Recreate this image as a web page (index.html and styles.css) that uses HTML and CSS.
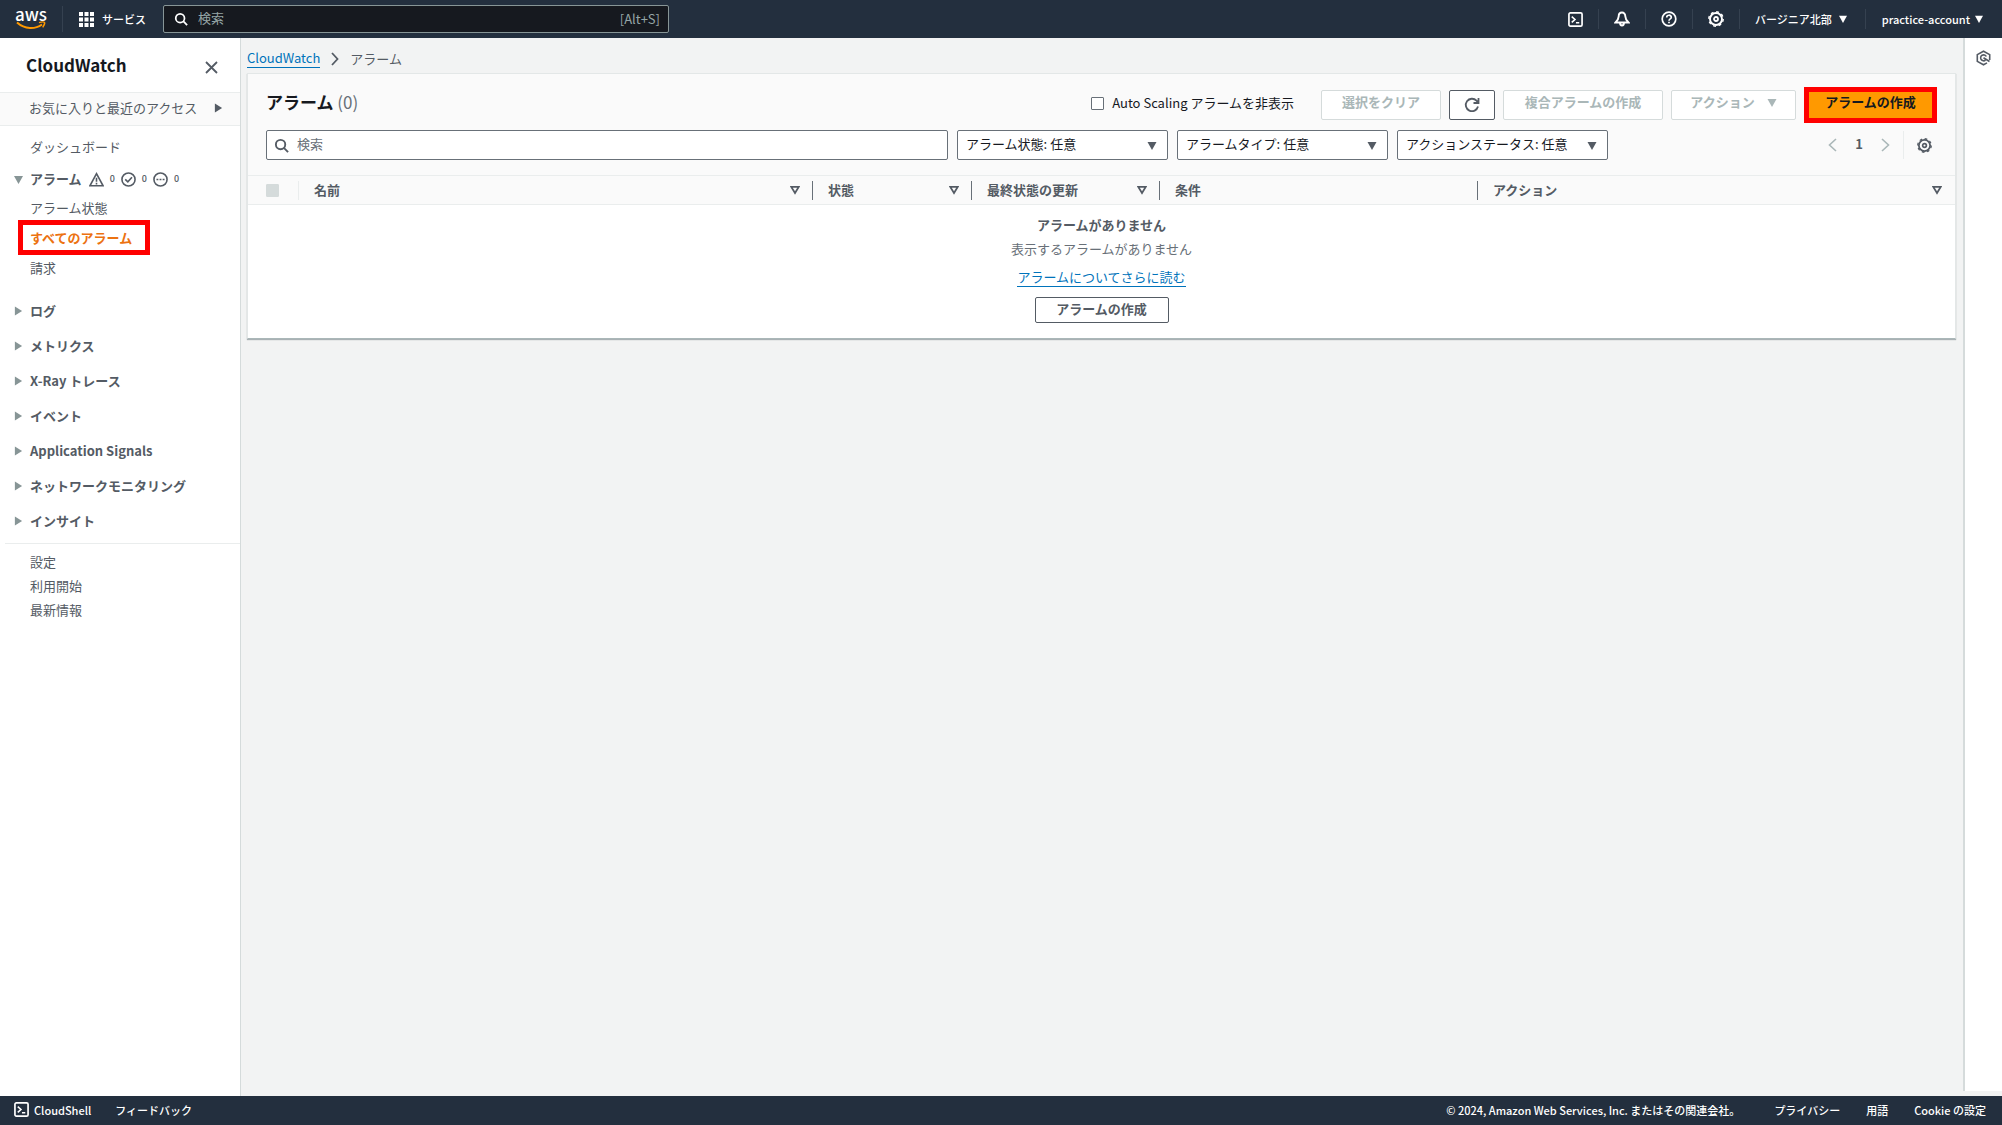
FILE: index.html
```html
<!DOCTYPE html>
<html lang="ja">
<head>
<meta charset="utf-8">
<title>CloudWatch</title>
<link rel="stylesheet" href="styles.css">
</head>
<body>
<svg width="0" height="0" class="sprite" aria-hidden="true">
  <symbol id="i-search" viewBox="0 0 16 16"><circle cx="7" cy="7" r="5" fill="none" stroke="currentColor" stroke-width="2"/><path d="M10.5 10.5 15 15" stroke="currentColor" stroke-width="2"/></symbol>
  <symbol id="i-shell" viewBox="0 0 16 16"><rect x="1" y="1" width="14" height="14" rx="1.5" fill="none" stroke="currentColor" stroke-width="1.8"/><path d="M4 5l3.4 3L4 11M8.5 11.5H12" fill="none" stroke="currentColor" stroke-width="1.7"/></symbol>
  <symbol id="i-gear" viewBox="0 0 16 16"><circle cx="8" cy="8" r="6" fill="none" stroke="currentColor" stroke-width="1.9"/><circle cx="8" cy="8" r="7.2" fill="none" stroke="currentColor" stroke-width="1.4" stroke-dasharray="2.8 2.85"/><circle cx="8" cy="8" r="2" fill="none" stroke="currentColor" stroke-width="1.8"/></symbol>
  <symbol id="i-down" viewBox="0 0 10 10"><path d="M0 1h10L5 10z" fill="currentColor"/></symbol>
  <symbol id="i-right" viewBox="0 0 10 10"><path d="M1 0v10l8-5z" fill="currentColor"/></symbol>
  <symbol id="i-sort" viewBox="0 0 10 10"><path d="M1.2 1.8h7.6L5 8z" fill="none" stroke="currentColor" stroke-width="1.7"/></symbol>
</svg>

<header class="topbar">
  <a class="aws" href="#" aria-label="AWS"><span>aws</span><svg width="30" height="9" viewBox="0 0 30 9"><path d="M1 1.500C9 8.500 19 8.500 26 3.500" fill="none" stroke="#f90" stroke-width="2"/><path d="M23 1.600c3-.9 5-.7 5.400-.2s-.2 3-1.700 5" fill="none" stroke="#f90" stroke-width="1.500"/></svg></a>
  <button class="services"><svg width="15" height="15" viewBox="0 0 15 15" fill="currentColor"><path d="M0 0h4v4H0zM5.500 0h4v4h-4zM11 0h4v4h-4zM0 5.500h4v4H0zM5.500 5.500h4v4h-4zM11 5.500h4v4h-4zM0 11h4v4H0zM5.500 11h4v4h-4zM11 11h4v4h-4z"/></svg>サービス</button>
  <label class="topsearch"><svg width="14" height="14"><use href="#i-search"/></svg><input type="text" placeholder="検索" aria-label="検索"><span>[Alt+S]</span></label>
  <nav class="tools">
    <button aria-label="CloudShell"><svg width="15" height="15"><use href="#i-shell"/></svg></button>
    <button aria-label="通知"><svg width="16" height="16" viewBox="0 0 16 16" fill="none" stroke="currentColor" stroke-width="1.900"><path d="M8 1.500C6 1.500 4.700 3.200 4.700 5.200c0 2.500-1 4-3.200 6.300h13c-2.200-2.300-3.200-3.800-3.200-6.300 0-2-1.300-3.700-3.300-3.700zM6 11.500c0 4 4 4 4 0"/></svg></button>
    <button aria-label="ヘルプ"><svg width="16" height="16" viewBox="0 0 16 16" fill="none" stroke="currentColor" stroke-width="1.700"><circle cx="8" cy="8" r="6.800"/><path d="M5.700 6.500C5.700 3.500 10.300 3.500 10.300 6.300 10.300 8 8 7.800 8 9.800M8 10.700v1.600"/></svg></button>
    <button aria-label="設定"><svg width="16" height="16"><use href="#i-gear"/></svg></button>
    <button class="region">バージニア北部<svg width="8" height="8"><use href="#i-down"/></svg></button>
    <button class="account">practice-account<svg width="8" height="8"><use href="#i-down"/></svg></button>
  </nav>
</header>

<div class="shell">
  <aside class="side">
    <div class="side-title"><h2>CloudWatch</h2><button aria-label="閉じる"><svg width="13" height="13" viewBox="0 0 13 13" stroke="currentColor" stroke-width="1.800"><path d="M1 1l11 11M12 1 1 12"/></svg></button></div>
    <button class="favorites">お気に入りと最近のアクセス<svg width="9" height="10"><use href="#i-right"/></svg></button>
    <nav>
      <ul class="menu">
        <li><a href="#">ダッシュボード</a></li>
        <li class="group"><svg width="9" height="9"><use href="#i-down"/></svg><a href="#">アラーム</a>
          <span class="counts">
            <svg width="15" height="15" viewBox="0 0 16 16" fill="none" stroke="currentColor" stroke-width="1.700"><path d="M8 1.800 15 14.700H1zM8 6v4.500M8 11.500v1.700"/></svg>0
            <svg width="15" height="15" viewBox="0 0 16 16" fill="none" stroke="currentColor" stroke-width="1.700"><circle cx="8" cy="8" r="7"/><path d="M4.500 7.800 7.300 10.500 11.700 5.500"/></svg>0
            <svg width="15" height="15" viewBox="0 0 16 16" fill="none" stroke="currentColor" stroke-width="1.700"><circle cx="8" cy="8" r="7"/><path d="M3.700 8h2M7 8h2M10.300 8h2"/></svg>0
          </span>
        </li>
      </ul>
      <ul class="submenu">
        <li><a href="#">アラーム状態</a></li>
        <li><a class="current" href="#" aria-current="page">すべてのアラーム</a></li>
        <li><a href="#">請求</a></li>
      </ul>
      <ul class="groups">
        <li class="group"><svg width="9" height="10"><use href="#i-right"/></svg><a href="#">ログ</a></li>
        <li class="group"><svg width="9" height="10"><use href="#i-right"/></svg><a href="#">メトリクス</a></li>
        <li class="group"><svg width="9" height="10"><use href="#i-right"/></svg><a href="#">X-Ray トレース</a></li>
        <li class="group"><svg width="9" height="10"><use href="#i-right"/></svg><a href="#">イベント</a></li>
        <li class="group"><svg width="9" height="10"><use href="#i-right"/></svg><a href="#">Application Signals</a></li>
        <li class="group"><svg width="9" height="10"><use href="#i-right"/></svg><a href="#">ネットワークモニタリング</a></li>
        <li class="group"><svg width="9" height="10"><use href="#i-right"/></svg><a href="#">インサイト</a></li>
      </ul>
      <ul class="extras">
        <li><a href="#">設定</a></li>
        <li><a href="#">利用開始</a></li>
        <li><a href="#">最新情報</a></li>
      </ul>
    </nav>
  </aside>

  <main class="content">
    <nav class="crumbs"><a href="#">CloudWatch</a><svg width="8" height="14" viewBox="0 0 8 14" fill="none" stroke="currentColor" stroke-width="1.800"><path d="M1 1l5.500 6L1 13"/></svg><span>アラーム</span></nav>
    <section class="card">
      <div class="card-head">
        <div class="title-row">
          <h1>アラーム <span>(0)</span></h1>
          <label class="hide-auto"><input type="checkbox">Auto Scaling アラームを非表示</label>
          <div class="actions">
            <button class="btn w-clear" disabled>選択をクリア</button>
            <button class="btn w-refresh" aria-label="更新"><svg width="16" height="16" viewBox="0 0 16 16" fill="none" stroke="currentColor" stroke-width="1.800"><path d="M14 9.500A6.200 6.200 0 1 1 12.500 3.700L14 5.500M14.500 1v5H9.500"/></svg></button>
            <button class="btn w-composite" disabled>複合アラームの作成</button>
            <button class="btn w-action" disabled>アクション<svg width="10" height="9"><use href="#i-down"/></svg></button>
            <button class="btn primary">アラームの作成</button>
          </div>
        </div>
        <div class="filter-row">
          <label class="search"><svg width="15" height="15"><use href="#i-search"/></svg><input type="text" placeholder="検索" aria-label="アラームを検索"></label>
          <div class="select"><select aria-label="アラーム状態"><option>アラーム状態: 任意</option></select><svg width="10" height="9"><use href="#i-down"/></svg></div>
          <div class="select"><select aria-label="アラームタイプ"><option>アラームタイプ: 任意</option></select><svg width="10" height="9"><use href="#i-down"/></svg></div>
          <div class="select"><select aria-label="アクションステータス"><option>アクションステータス: 任意</option></select><svg width="10" height="9"><use href="#i-down"/></svg></div>
          <div class="pager">
            <button aria-label="前へ" disabled><svg width="9" height="14" viewBox="0 0 9 14" fill="none" stroke="currentColor" stroke-width="1.600"><path d="M8 1 1.500 7 8 13"/></svg></button>
            <b>1</b>
            <button aria-label="次へ" disabled><svg width="9" height="14" viewBox="0 0 9 14" fill="none" stroke="currentColor" stroke-width="1.600"><path d="M1 1l6.500 6L1 13"/></svg></button>
            <button class="prefs" aria-label="表示設定"><svg width="15" height="15"><use href="#i-gear"/></svg></button>
          </div>
        </div>
      </div>
      <table>
        <colgroup><col class="c-check"><col class="c-name"><col class="c-state"><col class="c-updated"><col class="c-cond"><col></colgroup>
        <thead>
          <tr>
            <th class="check"><div><input type="checkbox" aria-label="すべて選択" disabled></div></th>
            <th><div>名前<svg width="10" height="10"><use href="#i-sort"/></svg></div></th>
            <th><div>状態<svg width="10" height="10"><use href="#i-sort"/></svg></div></th>
            <th><div>最終状態の更新<svg width="10" height="10"><use href="#i-sort"/></svg></div></th>
            <th><div>条件</div></th>
            <th><div>アクション<svg width="10" height="10"><use href="#i-sort"/></svg></div></th>
          </tr>
        </thead>
        <tbody>
          <tr><td colspan="6">
            <div class="empty">
              <b>アラームがありません</b>
              <p>表示するアラームがありません</p>
              <a href="#">アラームについてさらに読む</a>
              <button class="btn">アラームの作成</button>
            </div>
          </td></tr>
        </tbody>
      </table>
    </section>
  </main>

  <aside class="help"><button aria-label="情報"><svg width="15" height="16" viewBox="0 0 15 16" fill="none" stroke="currentColor" stroke-width="1.600"><path d="M13.700 10V4.600L7.500 1.200 1.300 4.600v6.800l6.200 3.400 3.500-1.900"/><path d="M10.300 6.500A3 3 0 1 0 9.500 10.200M7.500 7.800 13.500 11.500"/></svg></button></aside>
</div>

<footer class="footer">
  <a href="#"><svg width="15" height="15"><use href="#i-shell"/></svg>CloudShell</a>
  <a href="#">フィードバック</a>
  <span>© 2024, Amazon Web Services, Inc. またはその関連会社。</span>
  <a href="#">プライバシー</a>
  <a href="#">用語</a>
  <a href="#">Cookie の設定</a>
</footer>
</body>
</html>
```
FILE: styles.css
```css
* { box-sizing: border-box; }
body {
  margin: 0;
  min-height: 100vh;
  display: flex;
  flex-direction: column;
  background: #f2f3f3;
  color: #545b64;
  font: 13px/20px "Noto Sans CJK JP", sans-serif;
}
button, input, select { font: inherit; color: inherit; margin: 0; }
button { background: none; border: 0; padding: 0; display: flex; align-items: center; white-space: nowrap; }
a { color: inherit; text-decoration: none; }
ul { list-style: none; margin: 0; padding: 0; }
h1, h2, p { margin: 0; }
svg { flex: none; display: block; }
.sprite { position: absolute; }

/* Top bar */
.topbar {
  height: 38px;
  display: flex;
  align-items: center;
  background: #232f3e;
  color: #fff;
  font-size: 11px;
  font-weight: 500;
}
.aws {
  display: flex;
  flex-direction: column;
  align-items: center;
  width: 63px;
  padding-bottom: 2px;
  border-right: 1px solid #354150;
  font-size: 17px;
  line-height: 15px;
}
.services { gap: 8px; padding: 0 17px 0 16px; font-weight: 500; }
.topsearch {
  display: flex;
  align-items: center;
  width: 506px;
  height: 28px;
  padding: 0 8px 0 10px;
  gap: 10px;
  background: #16191f;
  border: 1px solid #879596;
  border-radius: 2px;
  font-size: 13px;
  font-weight: 400;
}
.topsearch input { flex: 1; min-width: 0; border: 0; padding: 0 0 2px; background: none; }
.topsearch input::placeholder, .topsearch span { color: #95a5a6; opacity: 1; }
.tools { margin-left: auto; display: flex; }
.tools button { width: 47px; height: 20px; justify-content: center; border-right: 1px solid #354150; font-weight: 500; }
.tools .region { width: auto; padding: 0 18px 0 15px; gap: 7px; }
.tools .account { width: auto; padding: 0 19px 0 16px; gap: 5px; border: 0; }

.shell { flex: 1; display: flex; }

/* Side navigation */
.side { width: 241px; background: #fff; border-right: 1px solid #d5dbdb; }
.side-title { display: flex; align-items: center; justify-content: space-between; height: 54px; padding: 0 22px 0 26px; }
.side-title h2 { font-size: 17px; color: #16191f; }
.side-title button { padding-top: 4px; }
.favorites {
  width: 100%;
  height: 34px;
  padding: 0 17px 2px 29px;
  justify-content: space-between;
  background: #fafafa;
  border-top: 1px solid #eaeded;
  border-bottom: 1px solid #eaeded;
}
.menu { display: flex; flex-direction: column; gap: 12px; padding: 11px 0 9px 30px; }
.group { display: flex; align-items: center; gap: 7px; font-weight: 700; margin-left: -16px; }
.group > svg { color: #879596; }
.counts { display: flex; align-items: center; gap: 6px; font-size: 9px; font-weight: 500; }
.submenu { padding-left: 30px; }
.current {
  display: block;
  width: 132px;
  margin: 2px 0 3px -12px;
  padding: 3px 7px 2px;
  border: 5px solid #f00;
  color: #ec7211;
  font-weight: 700;
}
.groups { display: flex; flex-direction: column; gap: 15px; padding: 23px 0 12px 30px; }
.extras { margin-left: 5px; padding: 6px 0 0 25px; border-top: 1px solid #eaeded; line-height: 24px; }

/* Main area */
.content { flex: 1; min-width: 0; padding: 0 7px 0 6px; }
.crumbs { display: flex; align-items: center; gap: 11px; height: 35px; padding-top: 6px; }
.crumbs a, .empty a { color: #0073bb; border-bottom: 1px solid #0073bb; line-height: 18px; }
.card { background: #fff; border: 1px solid #e3e7e7; border-bottom-color: #aab7b8; box-shadow: 0 1px 1px rgba(0, 28, 36, .3); }
.card-head { padding: 13px 18px 15px; background: #fafafa; display: flex; flex-direction: column; gap: 7px; }
.title-row { display: flex; align-items: center; height: 36px; }
h1 { font-size: 17px; color: #16191f; padding-bottom: 6px; }
h1 span { font-weight: 400; color: #687078; }
.hide-auto { margin-left: auto; display: flex; align-items: center; gap: 8px; color: #16191f; padding-bottom: 4px; }
input[type="checkbox"] { appearance: none; width: 13px; height: 13px; background: #fff; border: 1px solid #687078; border-radius: 1px; }
input[type="checkbox"]:disabled { background: #d5dbdb; border-color: #d5dbdb; }
.actions { display: flex; align-items: center; gap: 8px; margin-left: 27px; }
.btn {
  justify-content: center;
  gap: 12px;
  height: 30px;
  padding: 0 18px 6px;
  background: #fff;
  border: 1px solid #545b64;
  border-radius: 2px;
  color: #545b64;
  font-weight: 700;
}
.btn:disabled { color: #aab7b8; border-color: #d5dbdb; }
.w-clear { width: 120px; }
.w-refresh { width: 46px; padding-bottom: 0; }
.w-composite { width: 160px; }
.w-action { width: 125px; }
.btn.primary { width: 133px; height: 36px; padding: 0 0 6px; background: #f90; border: 5px solid #f00; border-radius: 0; color: #16191f; }

.filter-row { display: flex; gap: 9px; height: 30px; }
.search { flex: 0 1 682px; display: flex; align-items: center; gap: 8px; padding: 0 7px; background: #fff; border: 1px solid #687078; border-radius: 2px; }
.search input { flex: 1; min-width: 0; border: 0; padding: 0 0 2px; background: none; }
.search input::placeholder { color: #687078; opacity: 1; }
.select { flex: 0 0 211px; display: grid; align-items: center; }
.select > * { grid-area: 1 / 1; }
.select svg { justify-self: end; margin-right: 11px; pointer-events: none; }
.select select { appearance: none; width: 100%; height: 30px; padding: 0 8px 2px; background: #fff; border: 1px solid #687078; border-radius: 2px; color: #16191f; }
.pager { margin-left: auto; display: flex; align-items: center; gap: 18px; }
.pager b { padding-bottom: 2px; }
.pager button { color: #545b64; }
.pager button:disabled { color: #aab7b8; }
.pager .prefs { height: 28px; margin-left: -5px; padding: 0 5px 0 13px; border-left: 1px solid #eaeded; }

/* Alarm table */
table { width: 100%; table-layout: fixed; border-collapse: separate; border-spacing: 0; }
.c-check { width: 51px; }
.c-name { width: 514px; }
.c-state { width: 159px; }
.c-updated { width: 188px; }
.c-cond { width: 318px; }
th { height: 30px; padding: 0; text-align: left; background: #fafafa; border-top: 1px solid #eaeded; border-bottom: 1px solid #eaeded; }
th div { display: flex; align-items: center; justify-content: space-between; height: 19px; padding: 0 12px 0 15px; border-right: 1px solid #687078; }
th.check div { padding-left: 18px; border-color: #eaeded; }
th:last-child div { border: 0; padding-right: 13px; }
td { padding: 0; }
.empty { display: flex; flex-direction: column; align-items: center; padding: 10px 0 15px; }
.empty p { margin: 4px 0 9px; color: #687078; }
.empty .btn { width: 134px; height: 26px; margin-top: 10px; padding-bottom: 3px; }

.help { width: 39px; margin-bottom: 5px; padding: 12px 0 0 11px; background: #fff; border-left: 2px solid #d5dbdb; }

.footer { display: flex; align-items: center; height: 29px; padding: 0 16px 2px 14px; gap: 24px; background: #232f3e; color: #fff; font-size: 11px; font-weight: 500; }
.footer a { display: flex; align-items: center; gap: 5px; }
.footer span { margin-left: auto; margin-right: 10px; }
.footer span ~ a + a { margin-left: 2px; }
```
